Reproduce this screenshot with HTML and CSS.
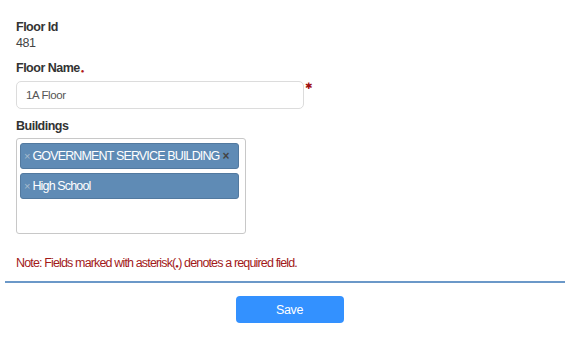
FILE: index.html
```html
<!DOCTYPE html>
<html lang="en">
<head>
    <meta charset="UTF-8">
    <meta name="viewport" content="width=device-width, initial-scale=1.0">
    <title>Edit Floor</title>
    <link rel="stylesheet" href="styles.css">
</head>
<body>

    <!-- Dettagli del piano -->
    <div class="floor-form">
        <div class="field">
            <label class="field-label">Floor Id</label>
            <div class="field-value">481</div>
        </div>

        <div class="field">
            <label class="field-label" for="floorName">Floor Name<span class="req-dot">&#9679;</span></label>
            <div class="input-row">
                <input type="text" id="floorName" class="text-input" value="1A Floor">
                <span class="req-star">&#10033;</span>
            </div>
        </div>

        <div class="field">
            <label class="field-label">Buildings</label>
            <div class="tag-box">
                <div class="tag">
                    <span class="tag-remove">&times;</span><span class="tag-text">GOVERNMENT SERVICE BUILDING</span><span class="tag-close">&times;</span>
                </div>
                <div class="tag">
                    <span class="tag-remove">&times;</span><span class="tag-text">High School</span>
                </div>
            </div>
        </div>

        <p class="note">Note: Fields marked with asterisk(<span class="note-dot">&#9679;</span>) denotes a required field.</p>
    </div>

    <div class="divider"></div>

    <div class="actions">
        <button class="save-btn">Save</button>
    </div>

</body>
</html>
```

FILE: styles.css
```css
body {
    font-family: "Liberation Sans", Arial, sans-serif;
    font-size: 12px;
    color: #333;
    margin: 0;
    padding: 0;
    background: #fff;
}

.floor-form {
    padding: 19px 16px 0 16px;
}

.field {
    margin-bottom: 9px;
}

.field-label {
    display: block;
    font-weight: bold;
    font-size: 12.5px;
    letter-spacing: -0.5px;
    line-height: 16px;
    color: #333;
}

.field-value {
    font-size: 12.5px;
    letter-spacing: -0.4px;
    line-height: 16px;
    color: #444;
}

.req-dot {
    color: #b01515;
    font-size: 6px;
    vertical-align: -1px;
    margin-left: 1px;
}

.input-row {
    display: flex;
    align-items: flex-start;
    margin-top: 2px;
}

.text-input {
    width: 288px;
    height: 28px;
    box-sizing: border-box;
    border: 1px solid #dcdcdc;
    border-radius: 5px;
    padding: 0 9px;
    font-family: "Liberation Sans", Arial, sans-serif;
    font-size: 11.5px;
    letter-spacing: -0.4px;
    color: #555;
}

.req-star {
    color: #a01010;
    font-size: 9px;
    line-height: 10px;
    margin-left: 1px;
}

.tag-box {
    width: 230px;
    height: 96px;
    box-sizing: border-box;
    border: 1px solid #c8c8c8;
    border-radius: 3px;
    margin-top: 4px;
    padding: 4px 6px 0 3px;
}

.tag {
    display: flex;
    align-items: center;
    height: 26px;
    box-sizing: border-box;
    background-color: #5f8bb5;
    border: 1px solid #52799f;
    border-radius: 3px;
    color: #fff;
    margin-bottom: 4px;
    white-space: nowrap;
    overflow: hidden;
}

.tag-text {
    font-size: 12.5px;
    letter-spacing: -0.85px;
}

.tag-remove {
    color: #a9bccd;
    font-size: 11px;
    margin: 0 2px 0 3px;
}

.tag-close {
    color: #444;
    font-size: 12px;
    font-weight: bold;
    margin-left: 3px;
}

.note {
    color: #a21a1a;
    font-size: 12.5px;
    letter-spacing: -0.85px;
    margin: 21px 0 0 0;
    line-height: 16px;
}

.note-dot {
    font-size: 6px;
    vertical-align: -1px;
}

.divider {
    height: 2px;
    background-color: #6b98c8;
    margin: 7px 7px 0 5px;
}

.actions {
    display: flex;
    justify-content: center;
    padding: 13px 0 0 0;
}

.save-btn {
    width: 108px;
    height: 27px;
    background-color: #3391ff;
    color: #fff;
    border: none;
    border-radius: 4px;
    font-family: "Liberation Sans", Arial, sans-serif;
    font-size: 12.5px;
    letter-spacing: -0.4px;
    margin-left: 7px;
}
```
